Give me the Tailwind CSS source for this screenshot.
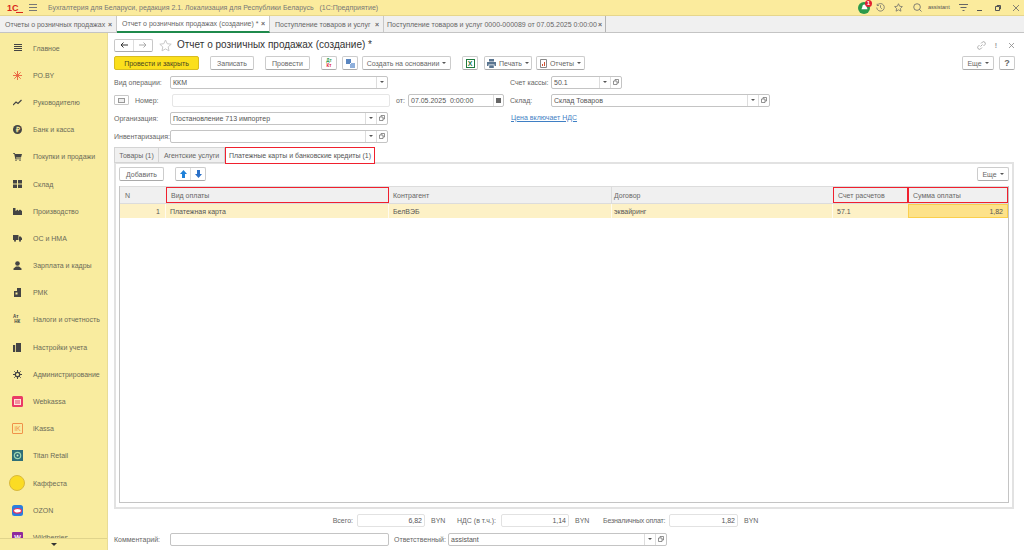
<!DOCTYPE html>
<html lang="ru">
<head>
  <meta charset="utf-8"/>
  <title>Отчет о розничных продажах</title>
  <script src="https://cdn.jsdelivr.net/npm/@tailwindcss/browser@4"></script>
</head>
<body class="w-[1024px] h-[550px] overflow-hidden bg-white text-[7px] leading-none whitespace-nowrap text-[#666] font-['Liberation_Sans',Arial,sans-serif]">

  <!-- Top bar -->
  <header class="h-[16px] bg-[#fbeb9d] border-b border-[#e6d68c] flex items-center">
    <svg class="ml-[7px] w-[16px] h-[10px]" viewBox="0 0 16 10"><text x="0" y="8" font-size="9" font-weight="700" fill="#d9261c" font-family="Liberation Sans">1С</text><path d="M9 9.500h7" stroke="#d9261c"/></svg>
    <svg class="ml-[6px] w-[8px] h-[7px]" viewBox="0 0 8 7"><path d="M0 .5h8M0 3.500h8M0 6.500h8" stroke="#777"/></svg>
    <span class="ml-[11px] text-[#777]">Бухгалтерия для Беларуси, редакция 2.1. Локализация для Республики Беларусь&nbsp;&nbsp;&nbsp;(1С:Предприятие)</span>
    <div class="ml-auto flex items-center">
      <div class="relative w-[12px] h-[12px] rounded-full bg-[#2b9a4b] flex items-center justify-center">
        <svg class="w-[7px] h-[7px]" viewBox="0 0 8 8"><path d="M4 .5c-2 0-2.500 1.500-2.500 3L.5 6h7l-1-2.500C6.500 2 6 .5 4 .5z" fill="#fff"/></svg>
        <span class="absolute -top-[2px] -right-[2px] w-[7px] h-[7px] rounded-full bg-[#e02030] text-white text-[6px] font-bold flex items-center justify-center">1</span>
      </div>
      <svg class="ml-[6px] w-[9px] h-[9px]" viewBox="0 0 10 10" fill="none" stroke="#666" stroke-width=".8"><path d="M1.500 2.500A4.200 4.200 0 1 1 .8 5M1.300.8v2h2M5 2.500V5l1.500 1.500"/></svg>
      <svg class="ml-[9px] w-[9px] h-[9px]" viewBox="0 0 10 10" fill="none" stroke="#666" stroke-width=".8"><path d="M5 .8l1.300 2.800 3 .4-2.200 2.100.6 3L5 7.600 2.300 9.100l.6-3L.7 4l3-.4z"/></svg>
      <svg class="ml-[10px] w-[9px] h-[9px]" viewBox="0 0 10 10" fill="none" stroke="#666" stroke-width=".9"><circle cx="4.500" cy="4.500" r="3.700"/><path d="M7.200 7.200L9.500 9.500"/></svg>
      <span class="ml-[6px] w-[25px] text-[5.500px] text-[#555]">assistant</span>
      <svg class="ml-[6px] w-[9px] h-[8px]" viewBox="0 0 9 8" fill="none" stroke="#666"><path d="M0 .5h9M1.500 3.500h6M3.500 6.500h2"/></svg>
      <svg class="ml-[9px] w-[6px] h-[6px]" viewBox="0 0 6 6"><path d="M0 5.500h5" stroke="#555"/></svg>
      <svg class="ml-[12px] w-[6px] h-[6px]" viewBox="0 0 6 6" fill="none" stroke="#555"><path d="M.5 1.500h4v4h-4zM1.800.5h3.700v3.700"/></svg>
      <svg class="ml-[12px] mr-[5px] w-[6px] h-[6px]" viewBox="0 0 6 6" stroke="#666" stroke-width=".8"><path d="M0 0l6 6M6 0L0 6"/></svg>
    </div>
  </header>

  <!-- Open windows -->
  <nav class="h-[17px] bg-[#f0f0f0] border-b border-[#c4c4c4] flex text-[#666]">
    <div class="w-[117px] flex items-center justify-between pl-[5px] pr-[4px] border-r border-[#c8c8c8]"><span>Отчеты о розничных продажах</span><span class="font-bold">×</span></div>
    <div class="w-[153px] flex items-center justify-between pl-[5px] pr-[4px] bg-white border-r border-[#c8c8c8] border-b-2 border-b-[#1f8a4c] -mb-px"><span>Отчет о розничных продажах (создание) *</span><span class="font-bold">×</span></div>
    <div class="w-[114px] flex items-center justify-between pl-[5px] pr-[4px] border-r border-[#c8c8c8]"><span>Поступление товаров и услуг</span><span class="font-bold">×</span></div>
    <div class="w-[222px] flex items-center justify-between pl-[3px] pr-[3px] border-r border-[#b4b4b4]"><span>Поступление товаров и услуг 0000-000089 от 07.05.2025 0:00:00</span><span class="font-bold">×</span></div>
  </nav>

  <div class="flex h-[517px]">
    <!-- Sections -->
    <aside class="relative w-[108px] shrink-0 bg-[#f9ec9f] border-r border-[#e8dc96] overflow-hidden pt-[1.500px]">
      <ul class="text-[#6b6b58]">
        <li class="h-[27.200px] flex items-center"><svg class="ml-[14px] w-[8px] h-[8px]" viewBox="0 0 8 8"><path d="M0 .5h8M0 2.500h8M0 4.500h8M0 6.500h8" stroke="#444"/></svg><span class="ml-[11px]">Главное</span></li>
        <li class="h-[27.200px] flex items-center"><svg class="ml-[13px] w-[9px] h-[9px]" viewBox="0 0 9 9" stroke="#e8603c" stroke-width=".9"><path d="M4.500 0v9M0 4.500h9M1.300 1.300l6.400 6.400M7.700 1.300L1.300 7.700"/></svg><span class="ml-[11px]">РО.BY</span></li>
        <li class="h-[27.200px] flex items-center"><svg class="ml-[13px] w-[9px] h-[7px]" viewBox="0 0 9 7" fill="none" stroke="#444" stroke-width="1.200"><path d="M0 6l3-3 2 1.500L8.500 1"/></svg><span class="ml-[11px]">Руководителю</span></li>
        <li class="h-[27.200px] flex items-center"><span class="ml-[13px] w-[9px] h-[9px] rounded-full bg-[#444] text-[#f9ec9f] text-[7px] font-bold flex items-center justify-center">₽</span><span class="ml-[11px]">Банк и касса</span></li>
        <li class="h-[27.200px] flex items-center"><svg class="ml-[13px] w-[9px] h-[8px]" viewBox="0 0 9 8" fill="#444"><path d="M0 0h1.800l.4 1H9L8 4.500H3l.3 1H8V6.300H2.400L1.200.8H0z"/><circle cx="3" cy="7.300" r=".7"/><circle cx="7" cy="7.300" r=".7"/></svg><span class="ml-[11px]">Покупки и продажи</span></li>
        <li class="h-[27.200px] flex items-center"><svg class="ml-[13px] w-[9px] h-[8px]" viewBox="0 0 9 8" fill="#444"><path d="M0 0h4v3.500H0zM5 0h4v3.500H5zM0 4.500h4V8H0zM5 4.500h4V8H5z"/></svg><span class="ml-[11px]">Склад</span></li>
        <li class="h-[27.200px] flex items-center"><svg class="ml-[13px] w-[9px] h-[8px]" viewBox="0 0 9 8" fill="#444"><path d="M0 8V1h2.500v3L5 2.500V4l2-1.500L9 4v4z"/></svg><span class="ml-[11px]">Производство</span></li>
        <li class="h-[27.200px] flex items-center"><svg class="ml-[13px] w-[9px] h-[7px]" viewBox="0 0 9 7" fill="#444"><path d="M0 0h5.500v5H0zM6 1.500h1.800L9 3.200V5H6z"/><circle cx="2" cy="5.800" r="1"/><circle cx="7" cy="5.800" r="1"/></svg><span class="ml-[11px]">ОС и НМА</span></li>
        <li class="h-[27.200px] flex items-center"><svg class="ml-[13px] w-[9px] h-[9px]" viewBox="0 0 9 9" fill="#444"><circle cx="4.500" cy="2.500" r="2.300"/><path d="M.5 9V7.500L3 5.500h3l2.500 2V9z"/></svg><span class="ml-[11px]">Зарплата и кадры</span></li>
        <li class="h-[27.200px] flex items-center"><svg class="ml-[13px] w-[9px] h-[9px]" viewBox="0 0 9 9" fill="#444"><path d="M4 0h4v3H4zM1 3h7v6H1z"/><path d="M2.500 4.500h2v2h-2z" fill="#f9ec9f"/></svg><span class="ml-[11px]">РМК</span></li>
        <li class="h-[27.200px] flex items-center"><span class="ml-[13px] w-[9px] text-[4.500px] leading-[4.500px] font-bold text-[#444]">Ат<br/>&nbsp;НК</span><span class="ml-[11px]">Налоги и отчетность</span></li>
        <li class="h-[27.200px] flex items-center"><svg class="ml-[13px] w-[9px] h-[9px]" viewBox="0 0 9 9" fill="#444"><path d="M3 0h5v9H3zM0 2h2.200v7H0z"/></svg><span class="ml-[11px]">Настройки учета</span></li>
        <li class="h-[27.200px] flex items-center"><svg class="ml-[13px] w-[9px] h-[9px]" viewBox="0 0 9 9" fill="none" stroke="#444"><circle cx="4.500" cy="4.500" r="2.200" stroke-width="1.300"/><path d="M4.500 0v2M4.500 7v2M0 4.500h2M7 4.500h2M1.300 1.300l1.400 1.400M6.300 6.300l1.400 1.400M7.700 1.300L6.300 2.700M2.700 6.300L1.300 7.700"/></svg><span class="ml-[11px]">Администрирование</span></li>
        <li class="h-[27.200px] flex items-center"><svg class="ml-[12px] w-[11px] h-[11px]" viewBox="0 0 11 11"><rect width="11" height="11" rx="1.500" fill="#ea3a66"/><rect x="2" y="3" width="7" height="6" fill="#fde4d8"/><path d="M3 5h5M3 7h5" stroke="#ea3a66"/></svg><span class="ml-[10px]">Webkassa</span></li>
        <li class="h-[27.200px] flex items-center"><span class="ml-[12px] w-[11px] h-[11px] rounded-[1px] border border-[#f0924a] text-[#f0924a] text-[7px] flex items-center justify-center">iK</span><span class="ml-[10px]">iKassa</span></li>
        <li class="h-[27.200px] flex items-center"><svg class="ml-[12px] w-[11px] h-[11px]" viewBox="0 0 11 11"><rect width="11" height="11" fill="#2f6f78"/><circle cx="5.500" cy="5.500" r="3.200" fill="none" stroke="#9fd6b0" stroke-width="1.200"/><circle cx="5.500" cy="5.500" r="1" fill="#cfe8c8"/></svg><span class="ml-[10px]">Titan Retail</span></li>
        <li class="h-[27.200px] flex items-center"><span class="ml-[9px] w-[16px] h-[16px] rounded-full bg-[#fbdc24] border border-[#d9b93c]"></span><span class="ml-[8px]">Каффеста</span></li>
        <li class="h-[27.200px] flex items-center"><svg class="ml-[12px] w-[11px] h-[11px]" viewBox="0 0 11 11"><rect width="11" height="11" rx="2.500" fill="#2a7ee0"/><ellipse cx="5.500" cy="5.800" rx="4" ry="2.300" fill="#fff" stroke="#e8305c" stroke-width="1.200"/></svg><span class="ml-[10px]">OZON</span></li>
        <li class="h-[27.200px] flex items-center"><span class="ml-[12px] w-[11px] h-[11px] rounded-[1px] bg-[#8e2a9c] text-white text-[7px] font-bold flex items-center justify-center">W</span><span class="ml-[10px]">Wildberries</span></li>
      </ul>
      <div class="absolute left-0 right-0 bottom-0 h-[12px] bg-[#f9ec9f] border-t border-[#e0d48c] flex items-center justify-center">
        <span class="border-x-[3px] border-x-transparent border-t-[3px] border-t-[#333]"></span>
      </div>
    </aside>

    <!-- Form -->
    <main class="flex-1 relative pl-[6px] pr-[9px]">
      <!-- Title -->
      <div class="h-[23px] flex items-center pt-[1px]">
        <div class="w-[39px] h-[13px] border border-[#c8c8c8] border-b-[#aaa] rounded-[2px] flex">
          <span class="flex-1 border-r border-[#ddd] flex items-center justify-center"><svg class="w-[8px] h-[6px]" viewBox="0 0 8 6" fill="none" stroke="#333"><path d="M8 3H1M3.500.5L1 3l2.500 2.500"/></svg></span>
          <span class="flex-1 flex items-center justify-center"><svg class="w-[8px] h-[6px]" viewBox="0 0 8 6" fill="none" stroke="#aaa"><path d="M0 3h7M4.500.5L7 3 4.500 5.500"/></svg></span>
        </div>
        <svg class="ml-[6px] w-[13px] h-[13px]" viewBox="0 0 13 13" fill="none" stroke="#c8c8c8"><path d="M6.500 1l1.700 3.700 4 .5-3 2.700.8 4-3.500-2-3.500 2 .8-4-3-2.700 4-.5z"/></svg>
        <h1 class="ml-[5px] text-[10px] text-[#333]">Отчет о розничных продажах (создание) *</h1>
        <div class="ml-auto flex items-center text-[#999]">
          <svg class="w-[9px] h-[9px]" viewBox="0 0 9 9" fill="none" stroke="#999" stroke-width=".8"><path d="M3.500 5.500l2-2M2.500 4L1 5.500a1.800 1.800 0 0 0 2.500 2.500L5 6.500M4 2.500L5.500 1A1.800 1.800 0 0 1 8 3.500L6.500 5"/></svg>
          <span class="ml-[9px] font-bold">!</span>
          <svg class="ml-[12px] w-[5px] h-[5px] mr-[1px]" viewBox="0 0 5 5" stroke="#888" stroke-width=".8"><path d="M0 0l5 5M5 0L0 5"/></svg>
        </div>
      </div>

      <!-- Command bar -->
      <div class="h-[14px] flex text-[#666]">
        <button class="w-[85px] bg-[#fbdf1c] border border-[#d8bc20] rounded-[2px] text-[#4a4520]">Провести и закрыть</button>
        <button class="ml-[11px] w-[44px] border border-[#ccc] border-b-[#aaa] rounded-[2px]">Записать</button>
        <button class="ml-[11px] w-[45px] border border-[#ccc] border-b-[#aaa] rounded-[2px]">Провести</button>
        <button class="ml-[11px] w-[16px] border border-[#ccc] border-b-[#aaa] rounded-[2px] text-[4.500px] leading-[5px] font-bold"><span class="text-[#2f9a4c]">Дт</span><br/><span class="text-[#e02030]">Кт</span></button>
        <button class="ml-[5px] w-[16px] border border-[#ccc] border-b-[#aaa] rounded-[2px] flex items-center justify-center"><svg class="w-[9px] h-[9px]" viewBox="0 0 9 9"><path d="M0 0h5v5H0z" fill="#5a86c0"/><path d="M4 4h5v5H4z" fill="#8fb0dc"/><path d="M1.500 7.500l6-6" stroke="#fff"/></svg></button>
        <button class="ml-[4px] w-[89px] border border-[#ccc] border-b-[#aaa] rounded-[2px] flex items-center justify-center">Создать на основании<span class="ml-[3px] border-x-[2px] border-x-transparent border-t-[2px] border-t-[#555]"></span></button>
        <button class="ml-[11px] w-[16px] border border-[#ccc] border-b-[#aaa] rounded-[2px] flex items-center justify-center"><span class="w-[9px] h-[9px] border border-[#1f7a3f] text-[#1f7a3f] text-[7px] font-bold flex items-center justify-center">X</span></button>
        <button class="ml-[6px] w-[48px] border border-[#ccc] border-b-[#aaa] rounded-[2px] flex items-center justify-center"><svg class="w-[9px] h-[9px] mr-[3px]" viewBox="0 0 9 9" fill="#5a7590"><path d="M2 0h5v2.500H2zM0 3h9v4H7.500V5.500h-6V7H0zM2.200 6.200h4.600V9H2.200z"/></svg>Печать<span class="ml-[3px] border-x-[2px] border-x-transparent border-t-[2px] border-t-[#555]"></span></button>
        <button class="ml-[4px] w-[49px] border border-[#ccc] border-b-[#aaa] rounded-[2px] flex items-center justify-center"><svg class="w-[7px] h-[9px] mr-[3px]" viewBox="0 0 7 9"><path d="M.5.5h6v8h-6z" fill="#fff" stroke="#888"/><path d="M2 7V5h1v2zM4 7V3h1v4z" fill="#d05030"/></svg>Отчеты<span class="ml-[3px] border-x-[2px] border-x-transparent border-t-[2px] border-t-[#555]"></span></button>
        <button class="ml-auto w-[32px] border border-[#ccc] border-b-[#aaa] rounded-[2px] flex items-center justify-center">Еще<span class="ml-[3px] border-x-[2px] border-x-transparent border-t-[2px] border-t-[#555]"></span></button>
        <button class="ml-[5px] w-[16px] border border-[#ccc] border-b-[#aaa] rounded-[2px] font-bold text-[9px]">?</button>
      </div>

      <!-- Fields -->
      <div class="mt-[5px] h-[14px] flex items-center">
        <span class="w-[56px]">Вид операции:</span>
        <div class="w-[218px] h-[13px] border border-[#c4c4c4] rounded-[2px] flex items-center"><span class="flex-1 pl-[2px] text-[#555]">ККМ</span><span class="w-[11px] h-full border-l border-[#ddd] flex items-center justify-center"><span class="border-x-[2px] border-x-transparent border-t-[2px] border-t-[#555]"></span></span></div>
        <span class="ml-[122px] w-[41px]">Счет кассы:</span>
        <div class="w-[71px] h-[13px] border border-[#c4c4c4] rounded-[2px] flex items-center"><span class="flex-1 pl-[2px] text-[#555]">50.1</span><span class="w-[11px] h-full border-l border-[#ddd] flex items-center justify-center"><span class="border-x-[2px] border-x-transparent border-t-[2px] border-t-[#555]"></span></span><span class="w-[11px] h-full border-l border-[#ddd] flex items-center justify-center"><svg class="w-[6px] h-[6px]" viewBox="0 0 6 6" fill="none" stroke="#666" stroke-width=".7"><path d="M.5 2h3.500v3.500H.5zM2 2V.5h3.500V4H4"/></svg></span></div>
      </div>
      <div class="mt-[4px] h-[14px] flex items-center">
        <span class="w-[15px] h-[10px] border border-[#c8c8c8] rounded-[1px] flex items-center justify-center"><span class="w-[7px] h-[5px] border border-[#999] bg-[#eee]"></span></span>
        <span class="ml-[6px] w-[37px]">Номер:</span>
        <div class="w-[218px] h-[13px] border border-[#e6e6e6] rounded-[2px]"></div>
        <span class="ml-[6px] w-[12px]">от:</span>
        <div class="w-[96px] h-[13px] border border-[#c4c4c4] rounded-[2px] flex items-center"><span class="flex-1 pl-[2px] text-[#555]">07.05.2025&nbsp;&nbsp;0:00:00</span><span class="w-[10px] h-full border-l border-[#ddd] flex items-center justify-center"><span class="w-[5px] h-[5px] bg-[#666]"></span></span></div>
        <span class="ml-[6px] w-[41px]">Склад:</span>
        <div class="w-[219px] h-[13px] border border-[#c4c4c4] rounded-[2px] flex items-center"><span class="flex-1 pl-[2px] text-[#555]">Склад Товаров</span><span class="w-[11px] h-full border-l border-[#ddd] flex items-center justify-center"><span class="border-x-[2px] border-x-transparent border-t-[2px] border-t-[#555]"></span></span><span class="w-[11px] h-full border-l border-[#ddd] flex items-center justify-center"><svg class="w-[6px] h-[6px]" viewBox="0 0 6 6" fill="none" stroke="#666" stroke-width=".7"><path d="M.5 2h3.500v3.500H.5zM2 2V.5h3.500V4H4"/></svg></span></div>
      </div>
      <div class="mt-[4px] h-[14px] flex items-center">
        <span class="w-[56px]">Организация:</span>
        <div class="w-[218px] h-[13px] border border-[#c4c4c4] rounded-[2px] flex items-center"><span class="flex-1 pl-[2px] text-[#555]">Постановление 713 импортер</span><span class="w-[11px] h-full border-l border-[#ddd] flex items-center justify-center"><span class="border-x-[2px] border-x-transparent border-t-[2px] border-t-[#555]"></span></span><span class="w-[11px] h-full border-l border-[#ddd] flex items-center justify-center"><svg class="w-[6px] h-[6px]" viewBox="0 0 6 6" fill="none" stroke="#666" stroke-width=".7"><path d="M.5 2h3.500v3.500H.5zM2 2V.5h3.500V4H4"/></svg></span></div>
        <a class="ml-[123px] -mt-[2px] text-[#3f7fc4] underline">Цена включает НДС</a>
      </div>
      <div class="mt-[4px] h-[14px] flex items-center">
        <span class="w-[56px]">Инвентаризация:</span>
        <div class="w-[218px] h-[13px] border border-[#c4c4c4] rounded-[2px] flex items-center"><span class="flex-1"></span><span class="w-[11px] h-full border-l border-[#ddd] flex items-center justify-center"><span class="border-x-[2px] border-x-transparent border-t-[2px] border-t-[#555]"></span></span><span class="w-[11px] h-full border-l border-[#ddd] flex items-center justify-center"><svg class="w-[6px] h-[6px]" viewBox="0 0 6 6" fill="none" stroke="#666" stroke-width=".7"><path d="M.5 2h3.500v3.500H.5zM2 2V.5h3.500V4H4"/></svg></span></div>
      </div>

      <!-- Tabs -->
      <div class="mt-[4px] h-[16px] flex relative z-10 text-[#666]">
        <div class="w-[45px] h-[16px] bg-[#f0f0f0] border border-[#d4d4d4] flex items-center justify-center">Товары (1)</div>
        <div class="w-[66px] h-[16px] bg-[#f0f0f0] border-y border-r border-[#d4d4d4] flex items-center justify-center">Агентские услуги</div>
        <div class="w-[150px] h-[17px] bg-white border border-[#f0202e] flex items-center justify-center text-[#555]">Платежные карты и банковские кредиты (1)</div>
      </div>

      <!-- Tab page -->
      <section class="-mt-px w-[900px] h-[347px] border-2 border-[#e2e2e2] px-[3px]">
        <div class="mt-[3px] h-[14px] flex">
          <button class="w-[45px] border border-[#ccc] border-b-[#aaa] rounded-[2px]">Добавить</button>
          <div class="ml-[11px] w-[31px] border border-[#ccc] border-b-[#aaa] rounded-[2px] flex">
            <span class="flex-1 border-r border-[#ddd] flex items-center justify-center"><svg class="w-[7px] h-[8px]" viewBox="0 0 7 8" fill="#1e80d8"><path d="M3.500 0L7 4H5v4H2V4H0z"/></svg></span>
            <span class="flex-1 flex items-center justify-center"><svg class="w-[7px] h-[8px]" viewBox="0 0 7 8" fill="#2a70c8"><path d="M3.500 8L0 4h2V0h3v4h2z"/></svg></span>
          </div>
          <button class="ml-auto w-[32px] border border-[#ccc] border-b-[#aaa] rounded-[2px] flex items-center justify-center">Еще<span class="ml-[3px] border-x-[2px] border-x-transparent border-t-[2px] border-t-[#555]"></span></button>
        </div>

        <!-- Table -->
        <div class="mt-[5px] h-[317px] border border-[#c4c4c4] border-t-0">
          <div class="h-[18px] grid grid-cols-[46px_223px_223px_221px_75px_1fr] bg-[#f0f0f0] border-y border-[#dcdcdc]">
            <div class="flex items-center pl-[5px]">N</div>
            <div class="flex items-center pl-[4px] border-[1.500px] border-[#f0202e]">Вид оплаты</div>
            <div class="flex items-center pl-[4px] border-r border-[#dcdcdc]">Контрагент</div>
            <div class="flex items-center pl-[2px]">Договор</div>
            <div class="flex items-center pl-[4px] border-[1.500px] border-[#f0202e]">Счет расчетов</div>
            <div class="flex items-center pl-[4px] border-[1.500px] border-[#f0202e]">Сумма оплаты</div>
          </div>
          <div class="h-[14px] grid grid-cols-[46px_223px_223px_221px_75px_1fr] bg-[#fdf1c6] text-[#555]">
            <div class="flex items-center justify-end pr-[5px] border-r border-white/70">1</div>
            <div class="flex items-center pl-[4px] border-r border-white/70">Платежная карта</div>
            <div class="flex items-center pl-[4px] border-r border-white/70">БелВЭБ</div>
            <div class="flex items-center pl-[2px] border-r border-white/70">эквайринг</div>
            <div class="flex items-center pl-[4px]">57.1</div>
            <div class="flex items-center justify-end pr-[4px] bg-[#fde28a] border border-[#fbcf4c]">1,82</div>
          </div>
        </div>
      </section>

      <!-- Totals -->
      <div class="mt-[5px] h-[13px] flex items-center">
        <span class="w-[239px] text-right">Всего:</span>
        <div class="ml-[4px] w-[68px] h-[13px] border border-[#e2e2e2] rounded-[2px] flex items-center justify-end pr-[2px] text-[#555]">6,82</div>
        <span class="ml-[6px] w-[26px]">BYN</span>
        <span class="w-[41px]">НДС (в т.ч.):</span>
        <div class="ml-[3px] w-[68px] h-[13px] border border-[#e2e2e2] rounded-[2px] flex items-center justify-end pr-[2px] text-[#555]">1,14</div>
        <span class="ml-[6px] w-[28px]">BYN</span>
        <span class="w-[66px] tracking-[-0.03em]">Безналичных оплат:</span>
        <div class="w-[69px] h-[13px] border border-[#e2e2e2] rounded-[2px] flex items-center justify-end pr-[2px] text-[#555]">1,82</div>
        <span class="ml-[6px]">BYN</span>
      </div>
      <div class="mt-[5px] h-[14px] flex items-center">
        <span class="w-[56px]">Комментарий:</span>
        <div class="w-[219px] h-[13px] border border-[#c4c4c4] rounded-[2px]"></div>
        <span class="ml-[5px] w-[54px]">Ответственный:</span>
        <div class="w-[219px] h-[13px] border border-[#c4c4c4] rounded-[2px] flex items-center"><span class="flex-1 pl-[2px] text-[#555]">assistant</span><span class="w-[11px] h-full border-l border-[#ddd] flex items-center justify-center"><span class="border-x-[2px] border-x-transparent border-t-[2px] border-t-[#555]"></span></span><span class="w-[11px] h-full border-l border-[#ddd] flex items-center justify-center"><svg class="w-[6px] h-[6px]" viewBox="0 0 6 6" fill="none" stroke="#666" stroke-width=".7"><path d="M.5 2h3.500v3.500H.5zM2 2V.5h3.500V4H4"/></svg></span></div>
      </div>
    </main>
  </div>
</body>
</html>
